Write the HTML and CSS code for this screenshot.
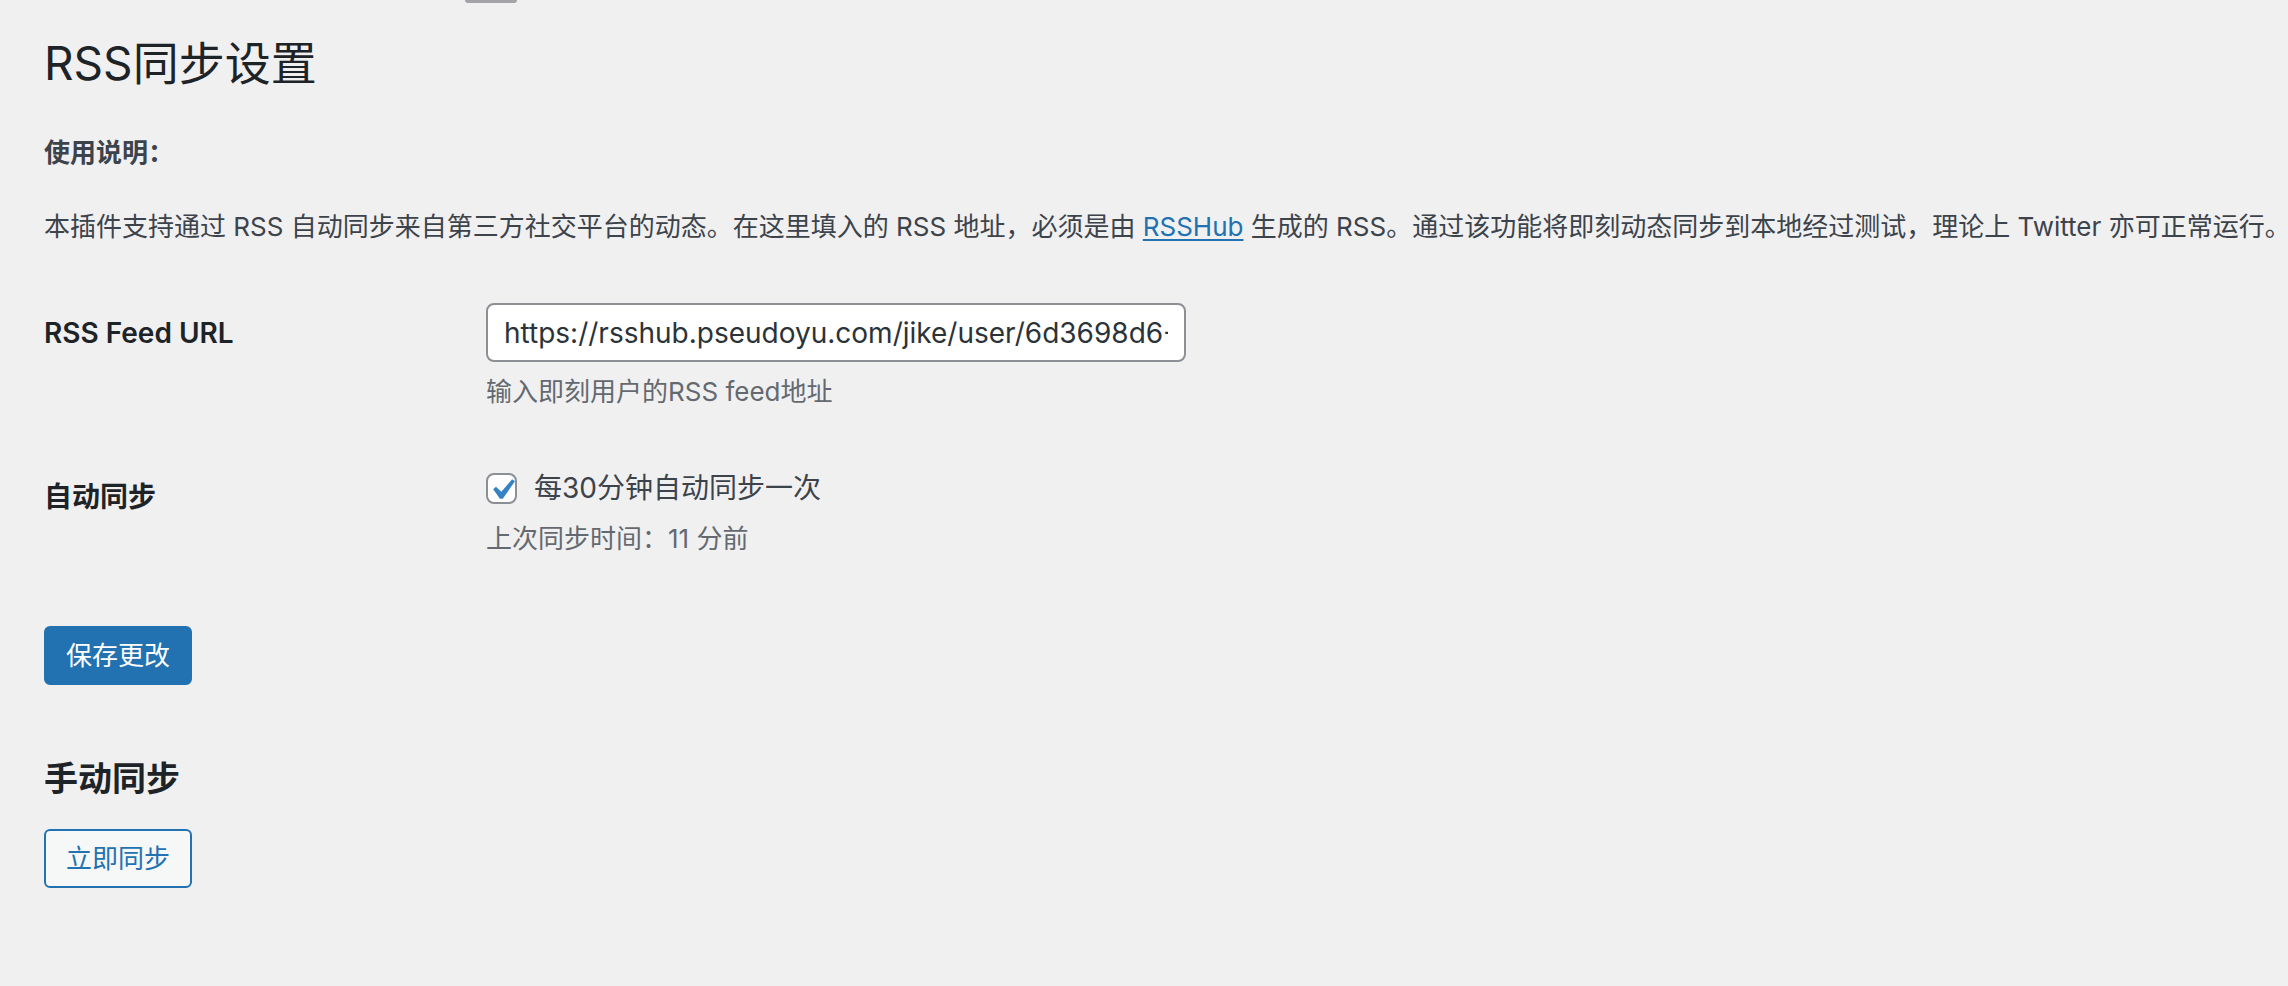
FILE: index.html
```html
<!DOCTYPE html>
<html lang="zh-CN">
<head>
<meta charset="utf-8">
<title>RSS同步设置</title>
<link rel="stylesheet" href="styles.css">
</head>
<body>
<div class="top-tab"></div>
<div class="wrap">
  <h1 class="page-title">RSS同步设置</h1>
  <p class="usage-title">使用说明：</p>
  <p class="intro">本插件支持通过 RSS 自动同步来自第三方社交平台的动态。在这里填入的 RSS 地址，必须是由 <a href="#" class="link">RSSHub</a> 生成的 RSS。通过该功能将即刻动态同步到本地经过测试，理论上 Twitter 亦可正常运行。</p>

  <form class="settings-form">
    <div class="form-table">
      <div class="form-row form-row-first">
        <div class="form-th"><label for="feed">RSS Feed URL</label></div>
        <div class="form-td">
          <input id="feed" class="regular-text" type="text" value="https://rsshub.pseudoyu.com/jike/user/6d3698d6-0c4b-4c6e-9d2a-7f3a1b2e5c8d">
          <p class="description">输入即刻用户的RSS feed地址</p>
        </div>
      </div>
      <div class="form-row">
        <div class="form-th">自动同步</div>
        <div class="form-td">
          <label class="check-label">
            <span class="checkbox">
              <svg class="check-mark" viewBox="0 0 20 20" width="42" height="42" aria-hidden="true"><path d="M14.83 4.89l1.34.94-5.81 8.38H9.02L5.78 9.67l1.34-1.25 2.57 2.4z" fill="#3582c4"/></svg>
            </span>
            <span>每30分钟自动同步一次</span>
          </label>
          <p class="description">上次同步时间：11 分前</p>
        </div>
      </div>
    </div>
    <p class="submit"><button type="button" class="button button-primary">保存更改</button></p>
  </form>

  <h2 class="section-title">手动同步</h2>
  <p class="manual"><button type="button" class="button button-secondary">立即同步</button></p>
</div>
</body>
</html>
```

FILE: styles.css
```css
html, body {
  margin: 0;
  padding: 0;
}

body {
  background: #f0f0f1;
  color: #3c434a;
  font-family: Inter, "Noto Sans CJK SC", "Noto Sans", sans-serif;
  font-size: 26px;
  line-height: 1.5;
  position: relative;
  min-height: 986px;
}

.top-tab {
  position: absolute;
  top: 0;
  left: 465px;
  width: 52px;
  height: 3px;
  background: #a4a4a8;
  border-radius: 0 0 4px 4px;
}

.wrap {
  padding: 0 4px 0 44px;
}

.page-title {
  margin: 0;
  padding-top: 33px;
  font-size: 46px;
  line-height: 60px;
  font-weight: 400;
  color: #1d2327;
}

.usage-title {
  margin: 40px 0 0;
  font-size: 26px;
  line-height: 39px;
  font-weight: 600;
  color: #3c434a;
}

.intro {
  margin: 35px 0 0;
  font-size: 26px;
  line-height: 39px;
  white-space: nowrap;
}

.link {
  color: #2271b1;
  text-decoration: underline;
  text-underline-offset: 3px;
  text-decoration-thickness: 2px;
}

.settings-form {
  margin: 0;
}

.form-table {
  margin-top: 27px;
}

.form-row {
  display: grid;
  grid-template-columns: 442px 1fr;
}

.form-th {
  padding: 42px 20px 40px 0;
  font-size: 28px;
  line-height: 36px;
  font-weight: 600;
  color: #1d2327;
}

.form-td {
  padding: 30px 0;
  font-size: 28px;
  line-height: 1.3;
}

.form-row-first .form-td {
  padding-bottom: 26px;
}

.regular-text {
  box-sizing: border-box;
  width: 700px;
  height: 59px;
  margin: 0;
  padding: 0 16px;
  border: 2px solid #8c8f94;
  border-radius: 8px;
  background: #fff;
  color: #2c3338;
  font-family: Inter, "Noto Sans CJK SC", sans-serif;
  font-size: 28px;
  display: block;
}

.description {
  margin: 10px 0 0;
  font-size: 26px;
  line-height: 39px;
  color: #646970;
}

.check-label {
  display: flex;
  align-items: center;
  gap: 17px;
  height: 42px;
  color: #3c434a;
  font-size: 28px;
}

.checkbox {
  position: relative;
  box-sizing: border-box;
  width: 31px;
  height: 31px;
  border: 2px solid #8c8f94;
  border-radius: 8px;
  background: #fff;
  flex: none;
}

.check-mark {
  position: absolute;
  left: -7px;
  top: -6px;
}

.submit {
  margin: 38px 0 0;
}

.button {
  box-sizing: border-box;
  height: 59px;
  padding: 0 20px;
  border-radius: 6px;
  font-family: Inter, "Noto Sans CJK SC", sans-serif;
  font-size: 26px;
  line-height: 1;
  display: inline-flex;
  align-items: center;
  cursor: pointer;
}

.button-primary {
  background: #2271b1;
  border: 2px solid #2271b1;
  color: #fff;
}

.button-secondary {
  background: #f6f7f7;
  border: 2px solid #2271b1;
  color: #2271b1;
}

.section-title {
  margin: 72px 0 0;
  font-size: 34px;
  line-height: 44px;
  font-weight: 600;
  color: #1d2327;
}

.manual {
  margin: 28px 0 0;
}
```
